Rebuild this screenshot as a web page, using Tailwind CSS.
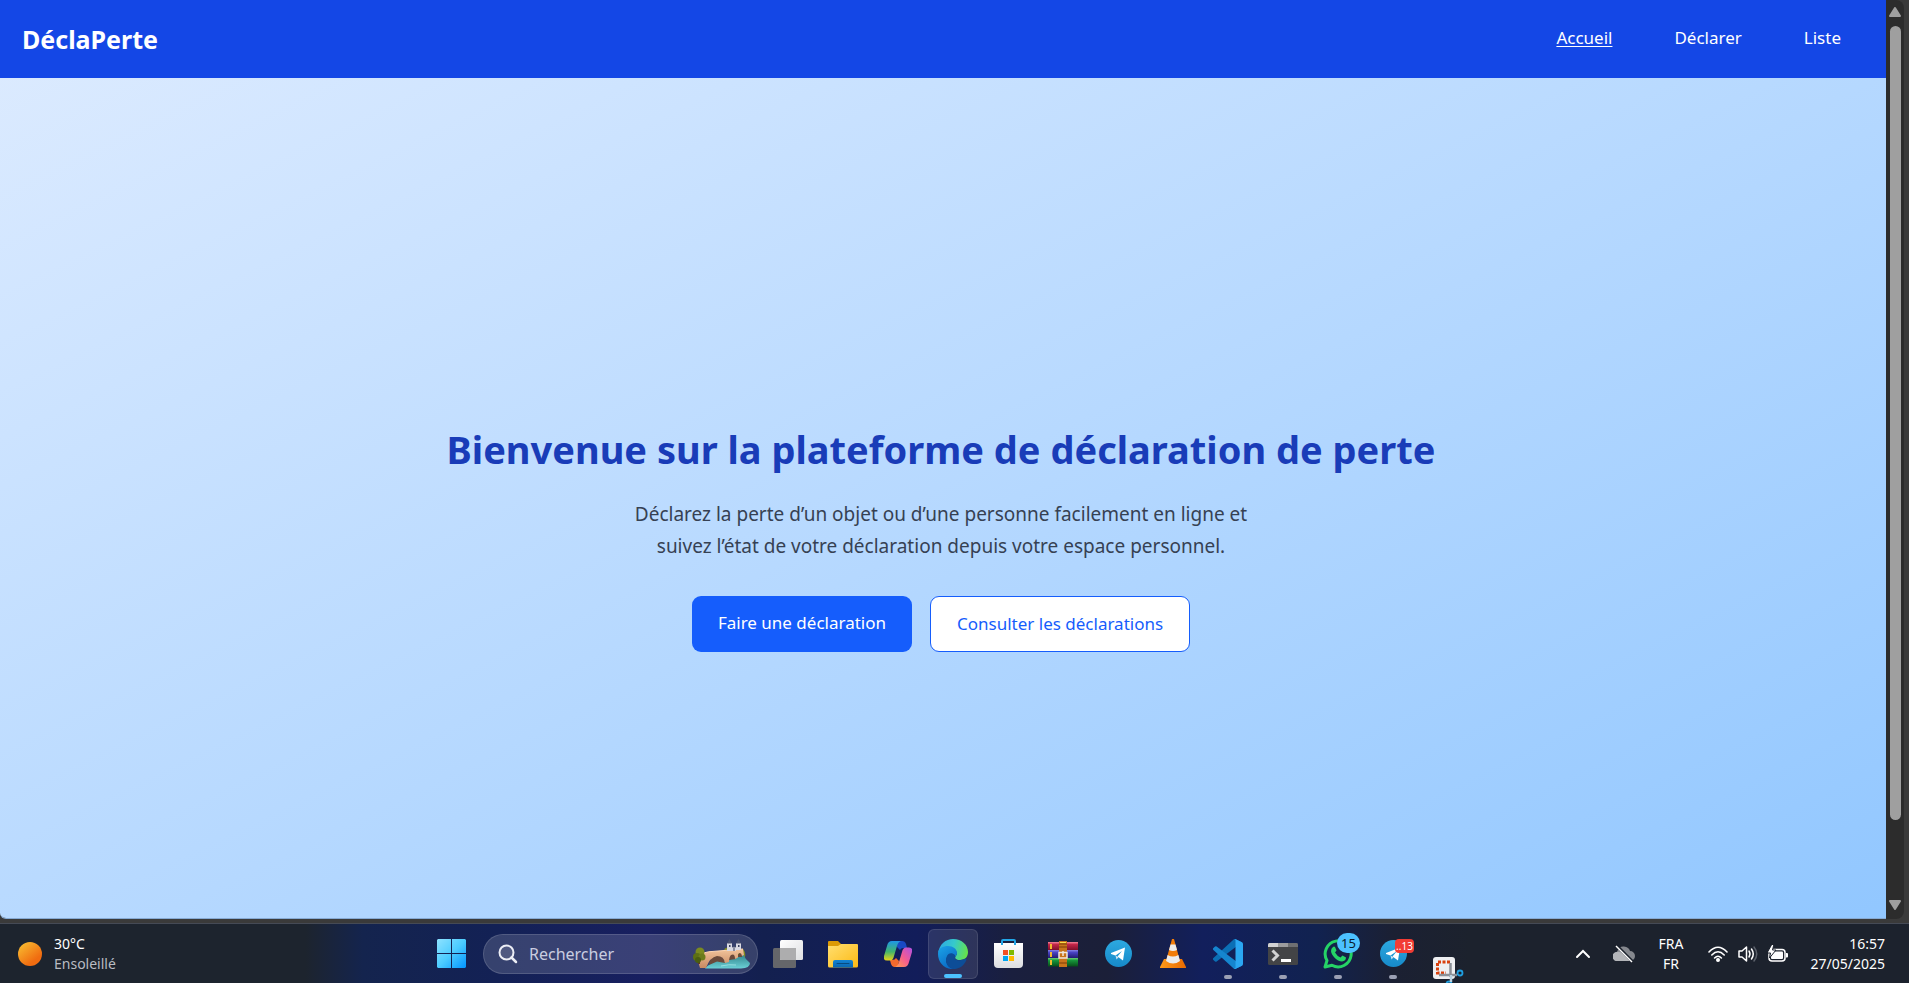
<!DOCTYPE html>
<html lang="fr">
<head>
<meta charset="utf-8">
<title>DéclaPerte</title>
<script src="https://cdn.jsdelivr.net/npm/@tailwindcss/browser@4"></script>
</head>
<body class="h-screen flex flex-col overflow-hidden bg-[#3a3a3a] font-['Segoe_UI','Noto_Sans',sans-serif]">

<!-- Browser window -->
<div class="flex-1 min-h-0 flex pr-[5px] pb-1">
  <div class="flex-1 min-w-0 overflow-hidden rounded-bl-md border-b border-[#86aad4]">
    <header class="h-[78px] bg-[#1447e6] text-white flex items-center justify-between pl-[22px] pr-[45px]">
      <div class="text-[25px] leading-8 font-bold">DéclaPerte</div>
      <nav class="flex gap-[62px] text-[17px] leading-6 pb-[2px]">
        <a href="#" class="underline underline-offset-2">Accueil</a>
        <a href="#">Déclarer</a>
        <a href="#">Liste</a>
      </nav>
    </header>
    <main class="min-h-full flex flex-col items-center justify-center text-center bg-linear-to-br from-blue-100 to-blue-300 pt-1 pr-1">
      <h1 class="text-[38px] leading-[46px] font-bold text-blue-800 mb-[26px]">Bienvenue sur la plateforme de déclaration de perte</h1>
      <p class="text-[19px] leading-8 text-gray-700 max-w-[672px] mb-[34px]">Déclarez la perte d’un objet ou d’une personne facilement en ligne et<br>suivez l’état de votre déclaration depuis votre espace personnel.</p>
      <div class="flex gap-[18px] text-[17px] leading-7">
        <a href="#" class="bg-[#155dfc] text-white px-[26px] py-[13px] rounded-[9px]">Faire une déclaration</a>
        <a href="#" class="bg-white text-[#155dfc] border border-[#155dfc] px-[26px] py-[13px] rounded-[9px]">Consulter les déclarations</a>
      </div>
    </main>
  </div>
  <div class="w-[18px] bg-[#2c2c2c] rounded-r-lg flex flex-col items-center pt-[7px] pb-[9px]">
    <svg class="w-3 h-[10px]" viewBox="0 0 12 10"><path d="M6 1 L11 9 H1 Z" fill="#9f9f9f" stroke="#9f9f9f" stroke-width="2" stroke-linejoin="round"/></svg>
    <div class="w-full flex-1 pt-[9px] pb-[80px] flex justify-center"><div class="w-[11px] rounded-full bg-[#9f9f9f]"></div></div>
    <svg class="w-3 h-[10px]" viewBox="0 0 12 10"><path d="M6 9 L11 1 H1 Z" fill="#9f9f9f" stroke="#9f9f9f" stroke-width="2" stroke-linejoin="round"/></svg>
  </div>
</div>

<!-- Taskbar -->
<footer class="h-[60px] shrink-0 grid grid-cols-[1fr_auto_1fr] items-center text-white border-t border-[#454a55] bg-[linear-gradient(90deg,#1d242e_0%,#1d242e_16%,#14244e_19%,#132155_26%,#181f60_34%,#13204f_40%,#121d5a_48%,#1a1f3e_53%,#1b1f38_58%,#121f5c_63%,#112250_69%,#1b2033_73%,#1c222d_77%,#1c222d_100%)]">
  <div class="flex items-center gap-3 pl-[18px] text-[14px] leading-5">
    <svg class="w-6 h-6" viewBox="0 0 24 24"><defs><linearGradient id="sun" x1="0" y1="0" x2=".8" y2="1"><stop offset="0" stop-color="#f9c534"/><stop offset=".8" stop-color="#f06c10"/></linearGradient></defs><circle cx="12" cy="12" r="12" fill="url(#sun)"/></svg>
    <div><div>30°C</div><div class="text-[#b9bcc2]">Ensoleillé</div></div>
  </div>

  <div class="flex items-center gap-[5px] pr-[10px]">
    <button aria-label="Démarrer" class="w-[50px] h-[50px] grid place-items-center mr-[2px]">
      <svg class="w-[29px] h-[29px]" viewBox="0 0 29 29"><defs><linearGradient id="win" x1="0" y1="0" x2="29" y2="29" gradientUnits="userSpaceOnUse"><stop offset="0" stop-color="#8ee2ff"/><stop offset=".5" stop-color="#4cccff"/><stop offset="1" stop-color="#0294fe"/></linearGradient></defs><path d="M1 0H14V14H0V1ZM15 0H28L29 1V14H15ZM0 15H14V29H1L0 28ZM15 15H29V28L28 29H15Z" fill="url(#win)"/></svg>
    </button>
    <label class="w-[275px] h-10 rounded-full bg-[#ffffff26] border border-[#ffffff24] flex items-center pl-[14px] pr-[7px] gap-[11px]">
      <svg class="w-5 h-5 shrink-0" viewBox="0 0 20 20" fill="none" stroke="#eceef5" stroke-width="2" stroke-linecap="round"><circle cx="8.500" cy="8.500" r="7" fill="#ffffff20"/><path d="M13.500 13.500 18 18" stroke-width="2.500"/></svg>
      <input type="text" placeholder="Rechercher" class="flex-1 min-w-0 text-[16px] leading-6 bg-transparent outline-none placeholder:text-[#c9cde0]">
      <svg class="w-[57px] h-[30px] shrink-0" viewBox="0 0 57 30">
        <defs><linearGradient id="river" x1="0" y1="0" x2="0" y2="1"><stop offset="0" stop-color="#2f8289"/><stop offset="1" stop-color="#6bd0d6"/></linearGradient><linearGradient id="stone" x1="0" y1="0" x2="0" y2="1"><stop offset="0" stop-color="#f2c49c"/><stop offset="1" stop-color="#c98a62"/></linearGradient></defs>
        <path d="M31 13Q31 8 35 9L50 10Q53 13 52 18L36 18Z" fill="#7e8a22"/>
        <path d="M12 29.500Q18 23 24 22L36 21 50 15Q52 20 57 24Q57 29 48 29.500Z" fill="url(#river)"/>
        <path d="M16 26Q17 17 24 16.500Q31 17 32 24L24 22.500ZM36 21V18Q38 14 42 15L43 20ZM45 18Q45 13 49 14L49 18Z" fill="#6b4a3b"/>
        <path d="M6 15Q16 12 25 12L50 10 51 16 49 17Q48 12 45 15V18.500L42 20Q42 14 38 16Q36 18 36 23L32 24Q31 17 24 17Q17 18 13 29H7L5 22Z" fill="url(#stone)"/>
        <path d="M6 15Q16 12 25 12L50 10" stroke="#ffd7b3" fill="none"/>
        <path d="M34 4H39V12H34ZM43 4H48V11H43ZM39 8H43V12H39Z" fill="#d9d9e2"/><path d="M34 4.500 36.500 0 39 4.500ZM43 4.500 45.500 0 48 4.500ZM39 8.500 41 6.500 43 8.500Z" fill="#49506e"/>
        <path d="M36 6h1.500v2H36ZM45 6h1.500v2H45ZM40.500 9h1v3h-1Z" fill="#39405e"/>
        <path d="M28 27Q36 25 43 26" stroke="#a5e4e6" fill="none" stroke-width=".8"/>
        <path d="M5 17H7V25H5Z" fill="#623b1f"/><circle cx="7" cy="13" r="4.500" fill="#7a8a20"/><circle cx="4" cy="18" r="4" fill="#5d7014"/><circle cx="9" cy="18" r="3.500" fill="#6c7c1c"/><circle cx="5" cy="21" r="3" fill="#4a5e10"/>
      </svg>
    </label>
    <button aria-label="Vue des tâches" class="w-[50px] h-[50px] grid place-items-center">
      <svg class="w-[30px] h-[28px]" viewBox="0 0 30 28"><defs><linearGradient id="tv" x1="0" y1="0" x2="1" y2="1"><stop offset="0" stop-color="#fff"/><stop offset="1" stop-color="#dedfe1"/></linearGradient></defs><rect x="0" y="8" width="23" height="20" rx="1.500" fill="#65666a"/><rect x="7" y="0" width="23" height="20" rx="1.500" fill="url(#tv)"/><path d="M7 8H23V20H8.500A1.500 1.500 0 0 1 7 18.500Z" fill="#adadae"/></svg>
    </button>
    <button aria-label="Explorateur de fichiers" class="w-[50px] h-[50px] grid place-items-center">
      <svg class="w-[30px] h-[28px]" viewBox="0 0 30 28"><defs><linearGradient id="fo" x1="0" y1="0" x2="1" y2="1"><stop offset="0" stop-color="#ffdf70"/><stop offset="1" stop-color="#fdb913"/></linearGradient><linearGradient id="fb" x1="0" y1="0" x2="0" y2="1"><stop offset="0" stop-color="#1383d4"/><stop offset="1" stop-color="#0a66b0"/></linearGradient></defs><path d="M0 2Q0 1 1 1H10L13 4V8H0Z" fill="#dc9a05"/><path d="M0 6H10L13 4H29Q30 4 30 5V26Q30 27.500 28.500 27.500H1.500Q0 27.500 0 26Z" fill="url(#fo)"/><path d="M5 27.500V22Q5 20 7 20H23Q25 20 25 22V27.500Z" fill="url(#fb)"/><path d="M9 23.500H21" stroke="#084b80" stroke-linecap="round"/></svg>
    </button>
    <button aria-label="Copilot" class="w-[50px] h-[50px] grid place-items-center">
      <svg class="w-[28px] h-[26px]" viewBox="0 0 28 26"><defs><linearGradient id="ca" x1="0" y1="0" x2="0" y2="1"><stop offset="0" stop-color="#1e96e8"/><stop offset=".55" stop-color="#42b56b"/><stop offset="1" stop-color="#e9d318"/></linearGradient><linearGradient id="cb" x1="1" y1="0" x2="0" y2="1"><stop offset="0" stop-color="#ae51e3"/><stop offset=".5" stop-color="#f45b92"/><stop offset="1" stop-color="#ffa04b"/></linearGradient></defs><path d="M13 0H18Q21 0 22 3L23 7H19Q17 7 16 9L13 6Z" fill="#1949c4"/><path d="M6 19H8Q11 19 12 17L15 20 14 26H10Q8 26 7 23Z" fill="#f3692e"/><path d="M8 0H17Q14 1 13 5L10 15Q9 19.500 6 19.500H3Q-1 19.500 0 15L3 5Q4 0 8 0Z" fill="url(#ca)"/><path d="M20 26H11Q14 25 15 21L18 11Q19 6.500 22 6.500H25Q29 6.500 28 11L25 21Q24 26 20 26Z" fill="url(#cb)"/></svg>
    </button>
    <button aria-label="Microsoft Edge" class="relative w-[50px] h-[50px] grid place-items-center rounded-md bg-white/10 border border-white/10">
      <svg class="w-[30px] h-[30px]" viewBox="0 0 30 30"><defs><linearGradient id="ea" x1="0" y1=".3" x2="1" y2=".5"><stop offset="0" stop-color="#2ea8e4"/><stop offset=".5" stop-color="#35c9cc"/><stop offset="1" stop-color="#65e34b"/></linearGradient><linearGradient id="eb" x1="0" y1="0" x2=".6" y2="1"><stop offset="0" stop-color="#1ba4e8"/><stop offset="1" stop-color="#0a68c4"/></linearGradient></defs><path d="M0 15C1 5 8 0 15 0C24 0 30 6 30 13C30 18 27 21 22 21C18 21 16 19 18 17C20 14 18 9 12 9C6 9 1 11 0 15Z" fill="url(#ea)"/><path d="M0 15C0 9 5 7 10 7C15 7 19 10 19 14C19 15 18 17 17 18C16 14 11 14 9 18C6 24 12 30 17 30C7 31 0 24 0 15Z" fill="url(#eb)"/><path d="M9 17C10 14 14 13 17 16L17 18C16 20 19 22 23 21L28 19.500Q29 20 28 22C25 28 20 30 16 30C10 30 6 23 9 17Z" fill="#0d4d97"/></svg>
      <span class="absolute bottom-0 w-[18px] h-1 rounded-full bg-[#4cc2ff]"></span>
    </button>
    <button aria-label="Microsoft Store" class="w-[50px] h-[50px] grid place-items-center">
      <svg class="w-[29px] h-[29px]" viewBox="0 0 29 29"><defs><linearGradient id="st" x1="0" y1="0" x2="0" y2="1"><stop offset="0" stop-color="#fff"/><stop offset="1" stop-color="#dcdde0"/></linearGradient></defs><path d="M0 4H29V25Q29 29 25 29H4Q0 29 0 25Z" fill="url(#st)"/><path d="M8 6V2Q8 1 9 1H20Q21 1 21 2V6" fill="none" stroke="#22a7e8" stroke-width="2"/><path d="M9 11H14V16H9Z" fill="#f25022"/><path d="M15 11H20V16H15Z" fill="#7fba00"/><path d="M9 17H14V22H9Z" fill="#00a4ef"/><path d="M15 17H20V22H15Z" fill="#ffb900"/></svg>
    </button>
    <button aria-label="WinRAR" class="w-[50px] h-[50px] grid place-items-center">
      <svg class="w-[30px] h-[26px]" viewBox="0 0 30 26"><defs><linearGradient id="ra" x1="0" y1="0" x2="0" y2="1"><stop offset="0" stop-color="#f3869b"/><stop offset=".3" stop-color="#c32649"/><stop offset="1" stop-color="#7e0f2b"/></linearGradient><linearGradient id="rb" x1="0" y1="0" x2="0" y2="1"><stop offset="0" stop-color="#8984e6"/><stop offset=".3" stop-color="#4a43c4"/><stop offset="1" stop-color="#221b70"/></linearGradient><linearGradient id="rc" x1="0" y1="0" x2="0" y2="1"><stop offset="0" stop-color="#6dcf74"/><stop offset=".3" stop-color="#16943a"/><stop offset="1" stop-color="#084d1a"/></linearGradient></defs><rect y="1" width="30" height="8" fill="url(#ra)"/><rect y="9" width="30" height="8" fill="url(#rb)"/><rect y="17" width="30" height="8.500" fill="url(#rc)"/><path d="M2 3h2v5H2ZM2 11h2v5H2ZM2 19h2v5H2Z" fill="#f2ba2f"/><path d="M11 0H19V26H11Z" fill="#c9741b"/><path d="M11 3H19M11 6H19M11 22H19" stroke="#7c3c08"/><path d="M12 1H18V2H12Z" fill="#f7e04b"/><path d="M11 11.500H19V17H11Z" fill="none" stroke="#efe8df" stroke-width="1.500"/><path d="M15 10V15" stroke="#efe8df" stroke-width="1.500"/></svg>
    </button>
    <button aria-label="Telegram" class="w-[50px] h-[50px] grid place-items-center">
      <svg class="w-[27px] h-[27px]" viewBox="0 0 27 27"><defs><linearGradient id="tg" x1="0" y1="0" x2="0" y2="1"><stop offset="0" stop-color="#2da9e0"/><stop offset="1" stop-color="#1689c9"/></linearGradient></defs><circle cx="13.500" cy="13.500" r="13.500" fill="url(#tg)"/><path d="M6 13 20 7.500 18 20.500 12.500 16.500 17 11 10.500 15.500 6 14Z" fill="#fff"/><path d="M10.500 15.500 11.500 19.500 13.500 17.200Z" fill="#cfe3f2"/></svg>
    </button>
    <button aria-label="VLC" class="w-[50px] h-[50px] grid place-items-center">
      <svg class="w-[26px] h-[29px]" viewBox="0 0 26 29"><defs><linearGradient id="vl" x1="0" y1="0" x2="1" y2="0"><stop offset="0" stop-color="#ff9a1a"/><stop offset="1" stop-color="#e96a00"/></linearGradient></defs><path d="M4 20H22L26 28V29H0V28Z" fill="url(#vl)"/><path d="M12 0H14L20 22Q13 27 6 22Z" fill="#f27c08"/><path d="M10.500 5.500H15.500L17 11Q13 13 9 11ZM7.600 16Q13 19 18.400 16L20 22Q13 27 6 22Z" fill="#ececec"/></svg>
    </button>
    <button aria-label="Visual Studio Code" class="relative w-[50px] h-[50px] grid place-items-center">
      <svg class="w-[30px] h-[30px]" viewBox="0 0 100 100"><path d="M96.460 10.800 75.860.88a6.250 6.250 0 0 0-7.100 1.200L1.300 63.600a4.170 4.170 0 0 0 0 6.160l5.500 5.010a4.170 4.170 0 0 0 5.320.23l81.230-61.600c2.720-2.070 6.640-.13 6.640 3.280v-.24a6.250 6.250 0 0 0-3.540-5.640Z" fill="#0b6fb5"/><path d="M96.460 89.200 75.860 99.120a6.250 6.250 0 0 1-7.100-1.200L1.300 36.400a4.170 4.170 0 0 1 0-6.160l5.500-5.010a4.170 4.170 0 0 1 5.320-.23l81.230 61.600c2.720 2.070 6.640.13 6.640-3.280v.24a6.250 6.250 0 0 1-3.540 5.640Z" fill="#1585cf"/><path d="M75.860 99.130a6.250 6.250 0 0 1-7.100-1.210c2.300 2.300 6.240.67 6.240-2.590V4.670c0-3.260-3.940-4.900-6.240-2.600a6.250 6.250 0 0 1 7.100-1.200l20.600 9.900A6.250 6.250 0 0 1 100 16.400v67.200c0 2.400-1.370 4.600-3.540 5.640Z" fill="#2ba7f2"/></svg>
      <span class="absolute bottom-0 w-2 h-1 rounded-full bg-[#9ba0b4]"></span>
    </button>
    <button aria-label="Terminal" class="relative w-[50px] h-[50px] grid place-items-center">
      <svg class="w-[30px] h-[22px]" viewBox="0 0 30 22"><rect width="30" height="22" rx="1.500" fill="#434446"/><path d="M0 4V1.500Q0 0 1.500 0H10V4Z" fill="#d2d2d2"/><path d="M10 0H20V4H10Z" fill="#9c9c9d"/><path d="M20 0H28.500Q30 0 30 1.500V4H20Z" fill="#6f7072"/><path d="M4.500 7.500 9.500 12.500 4.500 17.500" stroke="#d3d3d3" stroke-width="3" fill="none"/><path d="M13 17.500H23" stroke="#fff" stroke-width="3"/></svg>
      <span class="absolute bottom-0 w-2 h-1 rounded-full bg-[#9ba0b4]"></span>
    </button>
    <button aria-label="WhatsApp" class="relative w-[50px] h-[50px] grid place-items-center">
      <svg class="w-[30px] h-[30px]" viewBox="0 0 30 30"><path d="M2 28 4 21.500A13 13 0 1 1 9 26.300Z" fill="none" stroke="#25d366" stroke-width="3" stroke-linejoin="round"/><path d="M10 8Q11 7 12 8L13.500 11.500 12 13.500Q14 17 17.500 18.500L19.500 16.500 23 18.500Q23 22 19 22.500C14 22.500 8 16 8 12Q8 9.500 10 8Z" fill="#25d366"/></svg>
      <span class="absolute bottom-0 w-2 h-1 rounded-full bg-[#9ba0b4]"></span>
      <span class="absolute top-1 right-[3px] w-[23px] h-5 rounded-full bg-[#4cc2ff] text-[#0b1b2b] text-[13px] leading-5 text-center">15</span>
    </button>
    <button aria-label="Telegram, notifications" class="relative w-[50px] h-[50px] grid place-items-center">
      <svg class="w-[27px] h-[27px]" viewBox="0 0 27 27"><circle cx="13.500" cy="13.500" r="13.500" fill="url(#tg)"/><path d="M6 13 20 7.500 18 20.500 12.500 16.500 17 11 10.500 15.500 6 14Z" fill="#fff"/><path d="M10.500 15.500 11.500 19.500 13.500 17.200Z" fill="#cfe3f2"/></svg>
      <span class="absolute bottom-0 w-2 h-1 rounded-full bg-[#9ba0b4]"></span>
      <span class="absolute top-[10px] right-1 w-[19px] h-[14px] rounded bg-[#f23c34] text-[10px] leading-[14px] text-center">..13</span>
    </button>
    <button aria-label="Outil Capture d'écran" class="w-[50px] h-[50px] grid place-items-end justify-center">
      <svg class="w-[30px] h-[22px] overflow-visible" viewBox="0 0 30 22"><rect width="22" height="22" rx="3" fill="#eeeff1"/><path d="M17 5H4.500V16H13" fill="none" stroke="#d9400d" stroke-width="3" stroke-dasharray="3 1.500"/><path d="M17.500 6V20M6 18H24" stroke="#8b9097" stroke-width="2.500" fill="none"/><circle cx="27" cy="16" r="2.500" fill="none" stroke="#1f9fe0" stroke-width="1.800"/><circle cx="16" cy="27" r="2.500" fill="none" stroke="#1f9fe0" stroke-width="1.800"/><path d="M18 18V25" stroke="#b7d2e3" stroke-width="2.500"/></svg>
    </button>
  </div>

  <div class="flex items-center justify-end pr-6 text-[14px] leading-5">
    <button aria-label="Afficher les icônes cachées" class="mr-[22px]"><svg class="w-4 h-4" viewBox="0 0 16 16"><path d="M2 11 8 5 14 11" fill="none" stroke="#fff" stroke-width="2" stroke-linecap="round"/></svg></button>
    <svg class="w-[22px] h-[18px] mr-6" viewBox="0 0 22 18"><path d="M5 16A4.500 4.500 0 0 1 4 7Q6 1 11 1.500Q16 2 17 6A5 5 0 0 1 17 16Z" fill="#85888e"/><path d="M3 7Q7 6 10 9L19 15Q18 16 17 16H5A4.500 4.500 0 0 1 3 7Z" fill="#b3b5b9"/><path d="M4 1 20 17" stroke="#1c222d" stroke-width="3"/><path d="M3 1 19 17" stroke="#fff" stroke-width="1.500"/></svg>
    <div class="text-center mr-6"><div>FRA</div><div>FR</div></div>
    <svg class="w-5 h-4 mr-[10px]" viewBox="0 0 20 16" fill="none" stroke="#fff" stroke-width="1.600" stroke-linecap="round"><path d="M1 6Q10-3.500 19 6M3.800 9Q10 2.500 16.200 9M6.600 12Q10 8.500 13.400 12"/><circle cx="10" cy="14" r="1.200" fill="#fff"/></svg>
    <svg class="w-5 h-[18px] mr-[10px]" viewBox="0 0 20 18" fill="none" stroke="#fff" stroke-width="1.500" stroke-linecap="round" stroke-linejoin="round"><path d="M1 6H4L8.500 2V16L4 12H1Z"/><path d="M11 6Q13 9 11 12M13.500 4Q17 9 13.500 14"/><path d="M16 2Q21.500 9 16 16" stroke="#5b606a"/></svg>
    <svg class="w-5 h-[18px] mr-[23px]" viewBox="0 0 20 18"><rect x="1" y="4.500" width="16" height="11.500" rx="3" fill="none" stroke="#fff" stroke-width="1.500"/><rect x="3" y="6.500" width="12" height="7.500" rx="1" fill="#fff"/><path d="M18 8H19Q20 8 20 9V11.500Q20 12.500 19 12.500H18Z" fill="#fff"/><path d="M4-1-1 8H2.500L1.500 13 8 5H4.500L6-1Z" fill="#fff" stroke="#1c222d"/></svg>
    <div class="text-right"><div>16:57</div><div>27/05/2025</div></div>
  </div>
</footer>
</body>
</html>
